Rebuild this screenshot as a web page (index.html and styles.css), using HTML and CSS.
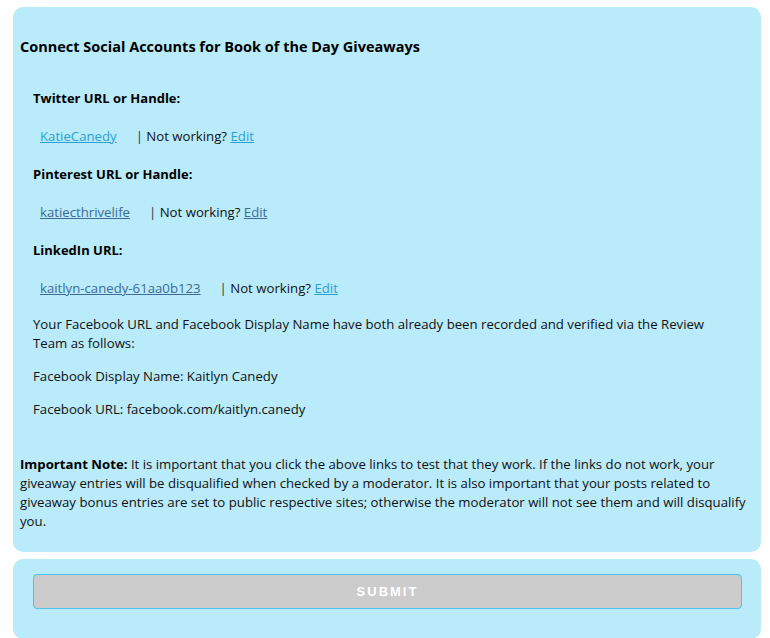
FILE: index.html
```html
<!DOCTYPE html>
<html>
<head>
<meta charset="utf-8">
<link rel="stylesheet" href="styles.css">
</head>
<body>
<div class="page">
  <section class="card card-main">
    <h2 class="title">Connect Social Accounts for Book of the Day Giveaways</h2>
    <div class="accounts">
      <div class="label">Twitter URL or Handle:</div>
      <div class="row"><a class="link light" href="#">KatieCanedy</a><span class="pipe">|</span> Not working? <a class="edit light" href="#">Edit</a></div>
      <div class="label">Pinterest URL or Handle:</div>
      <div class="row"><a class="link dark" href="#">katiecthrivelife</a><span class="pipe">|</span> Not working? <a class="edit dark" href="#">Edit</a></div>
      <div class="label">LinkedIn URL:</div>
      <div class="row"><a class="link dark" href="#">kaitlyn-canedy-61aa0b123</a><span class="pipe">|</span> Not working? <a class="edit light" href="#">Edit</a></div>
      <p class="fb-intro">Your Facebook URL and Facebook Display Name have both already been recorded and verified via the Review Team as follows:</p>
      <p class="fb-name">Facebook Display Name: Kaitlyn Canedy</p>
      <p class="fb-url">Facebook URL: facebook.com/kaitlyn.canedy</p>
    </div>
    <p class="note"><strong>Important Note:</strong> It is important that you click the above links to test that they work. If the links do not work, your giveaway entries will be disqualified when checked by a moderator. It is also important that your posts related to giveaway bonus entries are set to public respective sites; otherwise the moderator will not see them and will disqualify you.</p>
  </section>
  <section class="card card-submit">
    <button class="submit" type="button">SUBMIT</button>
  </section>
</div>
</body>
</html>
```

FILE: styles.css
```css
html, body {
  margin: 0;
  padding: 0;
  background: #ffffff;
}
body {
  font-family: "Open Sans", "Noto Sans", sans-serif;
  font-size: 13.2px;
  color: #111;
}
.page {
  padding: 7px 9px 0 13px;
  display: flex;
  flex-direction: column;
  gap: 7px;
}
.card {
  background: #b9ebfa;
  border-radius: 10px;
}
.card-main {
  padding: 30px 3px 21px 7px;
}
.title {
  margin: 0;
  font-size: 14.5px;
  font-weight: 700;
  line-height: 20px;
  color: #000;
}
.accounts {
  padding: 0 20px 0 13px;
}
.label {
  margin-top: 19px;
  font-size: 13px;
  font-weight: 700;
  line-height: 19px;
  color: #000;
}
.accounts .label:first-child {
  margin-top: 32px;
}
.row {
  margin-top: 19px;
  padding-left: 7px;
  line-height: 19px;
}
.link {
  margin-right: 19px;
}
.light { color: #2a9fd3; }
.dark { color: #3d6a96; }
.pipe {
  color: #1d3a3a;
}
p {
  margin: 0;
  line-height: 18.5px;
}
.fb-intro { margin-top: 17px; }
.fb-name { margin-top: 15px; }
.fb-url { margin-top: 14px; }
.note {
  margin-top: 37px;
  line-height: 19px;
}
.note strong { color: #000; }
.card-submit {
  padding: 15px 19px 30px 20px;
}
.submit {
  display: block;
  width: 100%;
  height: 35px;
  background: #cccccc;
  border: 1px solid #4fc0e8;
  border-radius: 4px;
  color: #ffffff;
  font-family: "Liberation Sans", Arial, sans-serif;
  font-weight: 700;
  font-size: 13px;
  letter-spacing: 2px;
}
```
